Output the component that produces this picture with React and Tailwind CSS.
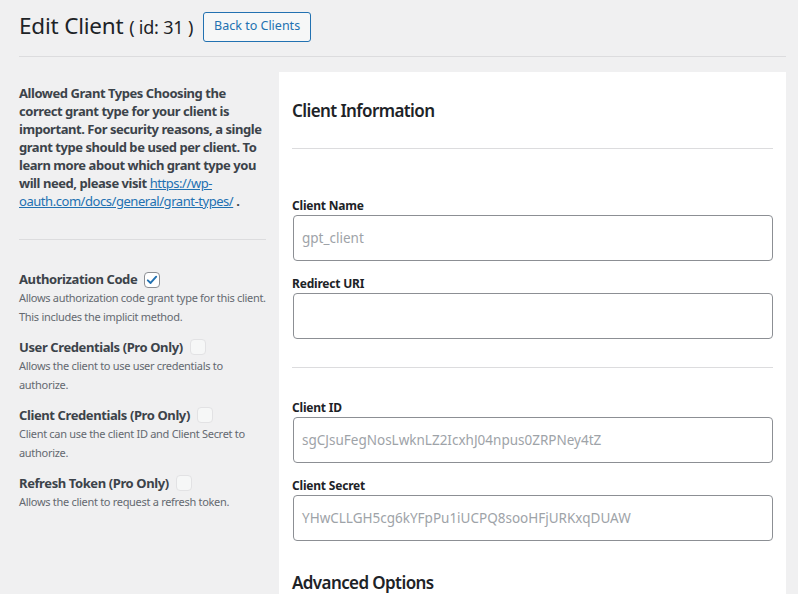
const grantTypes = [
  {
    label: 'Authorization Code',
    desc: 'Allows authorization code grant type for this client. This includes the implicit method.',
    checked: true,
  },
  {
    label: 'User Credentials (Pro Only)',
    desc: 'Allows the client to use user credentials to authorize.',
  },
  {
    label: 'Client Credentials (Pro Only)',
    desc: 'Client can use the client ID and Client Secret to authorize.',
  },
  {
    label: 'Refresh Token (Pro Only)',
    desc: 'Allows the client to request a refresh token.',
  },
];

function Checkbox({ checked }) {
  if (checked) {
    return (
      <span className="ml-1 inline-flex h-4 w-4 items-center justify-center rounded border border-[#8c8f94] bg-white align-[-3px]">
        <svg viewBox="0 0 16 16" className="h-[14px] w-[14px]">
          <path d="M3.2 8.4 L6.4 11.4 L12.8 4.2" fill="none" stroke="#2271b1" strokeWidth="2.2" strokeLinecap="round" strokeLinejoin="round" />
        </svg>
      </span>
    );
  }
  return <span className="ml-1 inline-block h-4 w-4 rounded border border-[#e2e2e4] bg-[#f6f7f7] align-[-3px]" />;
}

function Field({ label, value, className = '' }) {
  return (
    <div className={className}>
      <label className="block text-[12px] font-bold leading-[18px] tracking-[-0.2px] text-[#1d2327]">{label}</label>
      <div className="ml-px flex h-[46px] items-center rounded border border-[#8c8f94] bg-white px-2 text-[13.5px] text-[#9ea3a8]">
        {value}
      </div>
    </div>
  );
}

export default function App() {
  return (
    <div className="min-h-[594px] bg-[#f0f0f1] pl-[19px] pr-[12px] text-[#3c434a]" style={{ fontFamily: '"Noto Sans", "Open Sans", sans-serif' }}>
      {/* header */}
      <div className="flex items-center pt-[11px] pb-[14px]">
        <h1 className="text-[22.5px] leading-[30px] tracking-[-0.2px] text-[#1d2327]">
          Edit Client <span className="text-[18px]">( id: 31 )</span>
        </h1>
        <button className="ml-[10px] h-[30px] rounded-[3px] border border-[#2271b1] bg-[#f6f7f7] px-[10px] text-[12.5px] text-[#2271b1]">
          Back to Clients
        </button>
      </div>
      <div className="border-t border-[#dcdcde]" />

      <div className="mt-[15px] flex gap-[13px]">
        {/* left column */}
        <div className="w-[247px] shrink-0 pt-[12px]">
          <p className="text-[13px] font-bold leading-[18px] tracking-[-0.45px] text-[#3c434a]">
            Allowed Grant Types Choosing the correct grant type for your client is important. For security reasons, a single grant type should be used per client. To learn more about which grant type you will need, please visit{' '}
            <a href="#" className="font-normal text-[#2271b1] underline">https://wp-oauth.com/docs/general/grant-types/</a> .
          </p>
          <div className="mt-[29px] border-t border-[#dcdcde]" />
          <div className="mt-[30px] space-y-[12px]">
            {grantTypes.map((g) => (
              <div key={g.label}>
                <div className="text-[13px] font-bold leading-[18px] tracking-[-0.4px] text-[#3c434a]">
                  {g.label} <Checkbox checked={g.checked} />
                </div>
                <p className="text-[11px] leading-[19px] tracking-[-0.3px] text-[#646970]">{g.desc}</p>
              </div>
            ))}
          </div>
        </div>

        {/* right panel */}
        <div className="flex-1 bg-white px-[13px] pt-[28px] pb-[10px]">
          <h2 className="text-[17px] font-semibold leading-[22px] tracking-[-0.6px] text-[#1d2327]">Client Information</h2>
          <div className="mt-[26px] border-t border-[#dcdcde]" />
          <Field label="Client Name" value="gpt_client" className="mt-[48px]" />
          <Field label="Redirect URI" value="" className="mt-[14px]" />
          <div className="mt-[28px] border-t border-[#dcdcde]" />
          <Field label="Client ID" value="sgCJsuFegNosLwknLZ2IcxhJ04npus0ZRPNey4tZ" className="mt-[31px]" />
          <Field label="Client Secret" value="YHwCLLGH5cg6kYFpPu1iUCPQ8sooHFjURKxqDUAW" className="mt-[14px]" />
          <h2 className="mt-[31px] text-[17px] font-semibold leading-[22px] tracking-[-0.6px] text-[#1d2327]">Advanced Options</h2>
        </div>
      </div>
    </div>
  );
}
